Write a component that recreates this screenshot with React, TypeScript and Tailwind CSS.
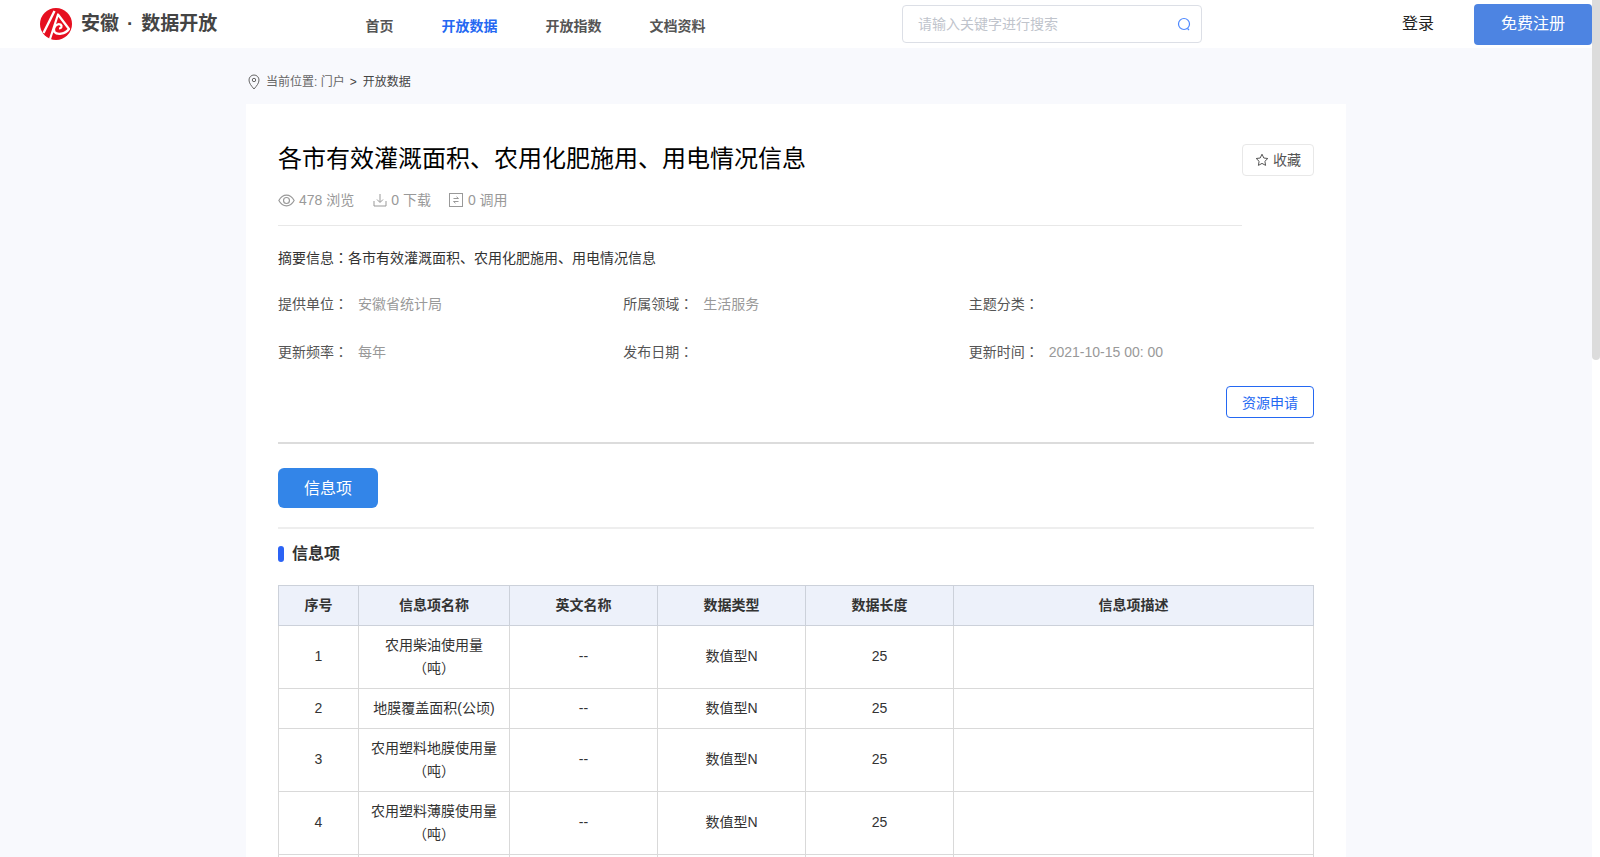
const rows = [
  { n: "1", name: "农用柴油使用量（吨）", h: "h-[63px]" },
  { n: "2", name: "地膜覆盖面积(公顷)", h: "h-[40px]" },
  { n: "3", name: "农用塑料地膜使用量（吨）", h: "h-[63px]" },
  { n: "4", name: "农用塑料薄膜使用量（吨）", h: "h-[63px]" },
];

const colon = <span className="font-['Noto_Sans_CJK_JP'] leading-none">：</span>;

function Logo() {
  return (
    <svg width="32" height="32" viewBox="0 0 32 32" className="shrink-0">
      <circle cx="16" cy="16" r="16" fill="#e60f20" />
      <g stroke="#fff" fill="none" strokeLinecap="butt" strokeLinejoin="round">
        <path d="M3.500 25 L14.500 3" strokeWidth="2.400" />
        <path d="M10 31 L18 6.500 L29 21 C25 26.500 17 27 14.500 24 C12.500 20.500 16.500 14.500 20.500 16.500 C22.500 18 21.500 20.500 19 20.500" strokeWidth="2.200" />
      </g>
    </svg>
  );
}

function Meta({ label, value }: { label: string; value?: string }) {
  return (
    <div className="flex text-sm leading-[22px]">
      <span className="text-[#555] w-[80px]">{label}{colon}</span>
      <span className="text-[#999]">{value}</span>
    </div>
  );
}

export default function App() {
  return (
    <div className="h-screen overflow-hidden flex bg-white" style={{ fontFamily: '"Liberation Sans","Noto Sans CJK SC",sans-serif' }}>
      <div className="flex-1 min-w-0 bg-[#f8f9fd]">
        <header className="h-12 bg-white flex items-center">
          <div className="ml-10 flex items-center gap-[9px] w-[325.5px]">
            <Logo />
            <span className="text-[19px] font-bold text-[#444] whitespace-nowrap">
              安徽<span className="mx-[8px]">·</span>数据开放
            </span>
          </div>
          <nav className="flex gap-12 text-sm font-bold text-[#555] pt-[3px]">
            <span>首页</span>
            <span className="text-[#2468f2]">开放数据</span>
            <span>开放指数</span>
            <span>文档资料</span>
          </nav>
          <div className="ml-[196.5px] w-[300px] h-[38px] border border-[#dcdfe6] rounded bg-white flex items-center px-[15px] justify-between text-sm text-[#c0c4cc]">
            <span>请输入关键字进行搜索</span>
            <svg width="16" height="16" viewBox="0 0 16 16" fill="none" stroke="#4d88ff" strokeWidth="1.200" className="-mr-[6px]">
              <circle cx="8" cy="8" r="5.500" />
              <path d="M11.500 12.500 L13 14" />
            </svg>
          </div>
          <span className="ml-[200px] text-base text-[#222]">登录</span>
          <button className="ml-10 w-[118px] h-[41px] rounded bg-[#4d84e2] text-white text-base">免费注册</button>
        </header>

        <main className="w-[1100px] mx-auto">
          <div className="h-14 flex items-center text-xs text-[#666] pt-[12px]">
            <svg width="14" height="16" viewBox="0 0 14 16" fill="none" stroke="#666" strokeWidth="1" className="ml-[1px] mr-[5px]">
              <path d="M7 15 C4 11.500 2 9 2 6 A5 5 0 0 1 12 6 C12 9 10 11.500 7 15Z" />
              <circle cx="7" cy="6" r="1.700" />
            </svg>
            <span>当前位置: 门户</span>
            <span className="ml-[5px] mr-[6px] text-[#444]">&gt;</span>
            <span className="text-[#444]">开放数据</span>
          </div>

          <section className="bg-white px-8 pt-[39px] pb-10">
            <div className="flex justify-between">
              <div className="w-[966px]">
                <h1 className="text-2xl leading-8 text-black">各市有效灌溉面积、农用化肥施用、用电情况信息</h1>
                <div className="mt-[15px] pb-[15px] flex items-center text-sm text-[#999] border-b border-[#e8e8e8]">
                  <svg width="17" height="17" viewBox="0 0 16 16" fill="none" stroke="#999" strokeWidth="1.100" className="mr-[4px]">
                    <path d="M0.800 8 C3 4 5.500 3 8 3 C10.500 3 13 4 15.200 8 C13 12 10.500 13 8 13 C5.500 13 3 12 0.800 8Z" />
                    <circle cx="8" cy="8" r="2.800" />
                  </svg>
                  <span>478 浏览</span>
                  <svg width="16" height="16" viewBox="0 0 16 16" fill="none" stroke="#999" className="ml-[18px] mr-[3px]">
                    <path d="M8 2 V10 M5 7.500 L8 10.500 L11 7.500 M2 9 V14 H14 V9" />
                  </svg>
                  <span>0 下载</span>
                  <svg width="16" height="16" viewBox="0 0 16 16" fill="none" stroke="#999" className="ml-[17px] mr-[4px]">
                    <rect x="1.500" y="1.500" width="13" height="13" />
                    <path d="M5.500 6.500 H10.500 L8.500 4.800 M10.500 9.500 H5.500 L7.500 11.200" />
                  </svg>
                  <span>0 调用</span>
                </div>
              </div>
              <button className="w-[72px] h-8 mt-[1px] border border-[#e8e8e8] rounded-sm flex items-center justify-center gap-1 text-sm text-[#555]">
                <svg width="14" height="14" viewBox="0 0 14 14" fill="none" stroke="#555" strokeWidth="1">
                  <path d="M7 1.200 L8.800 5 L12.800 5.500 L9.900 8.300 L10.600 12.400 L7 10.400 L3.400 12.400 L4.100 8.300 L1.200 5.500 L5.200 5Z" />
                </svg>
                收藏
              </button>
            </div>

            <p className="mt-[21px] text-sm leading-[22px] text-[#333]">摘要信息{colon}各市有效灌溉面积、农用化肥施用、用电情况信息</p>

            <div className="mt-[24px] grid grid-cols-3 gap-y-[26px]">
              <Meta label="提供单位" value="安徽省统计局" />
              <Meta label="所属领域" value="生活服务" />
              <Meta label="主题分类" />
              <Meta label="更新频率" value="每年" />
              <Meta label="发布日期" />
              <Meta label="更新时间" value="2021-10-15 00: 00" />
            </div>

            <div className="flex justify-end mt-[23px] pb-[24px] border-b-2 border-[#dcdcdc]">
              <button className="w-[88px] h-8 pt-[1px] border border-[#2468f2] rounded-sm text-sm text-[#2468f2]">资源申请</button>
            </div>

            <div className="mt-[24px] pb-[19px] border-b-2 border-[#eeeeee]">
              <button className="w-[100px] h-10 pt-[1px] rounded-md bg-[#3385e8] text-white text-base">信息项</button>
            </div>

            <h2 className="mt-[13px] flex items-center gap-2 text-base font-bold text-[#333] leading-6">
              <i className="w-[6px] h-4 rounded-[3px] bg-[#2b63f5]" />
              信息项
            </h2>

            <table className="mt-[19px] w-[1036px] table-fixed border-collapse text-sm text-[#333]">
              <colgroup>
                <col className="w-[80px]" />
                <col className="w-[151px]" />
                <col className="w-[148px]" />
                <col className="w-[148px]" />
                <col className="w-[148px]" />
                <col />
              </colgroup>
              <thead>
                <tr className="h-[40px] bg-[#edf1fa]">
                  {["序号", "信息项名称", "英文名称", "数据类型", "数据长度", "信息项描述"].map((t) => (
                    <th key={t} className="border border-[#ccd1da] font-bold pb-[1px]">{t}</th>
                  ))}
                </tr>
              </thead>
              <tbody>
                {rows.map((r) => (
                  <tr key={r.n} className={r.h}>
                    <td className="border border-[#d9d9d9] text-center pb-[2px]">{r.n}</td>
                    <td className="border border-[#d9d9d9] text-center leading-[23px] px-[10px]">{r.name}</td>
                    <td className="border border-[#d9d9d9] text-center pb-[2px]">--</td>
                    <td className="border border-[#d9d9d9] text-center pb-[2px]">数值型N</td>
                    <td className="border border-[#d9d9d9] text-center pb-[2px]">25</td>
                    <td className="border border-[#d9d9d9]" />
                  </tr>
                ))}
                <tr className="h-[63px]">
                  {[0, 1, 2, 3, 4, 5].map((i) => (
                    <td key={i} className="border border-[#d9d9d9]" />
                  ))}
                </tr>
              </tbody>
            </table>
          </section>
        </main>
      </div>
      <aside className="w-2 shrink-0 bg-white">
        <div className="h-[360px] rounded-b bg-[#dcdcdc]" />
      </aside>
    </div>
  );
}
